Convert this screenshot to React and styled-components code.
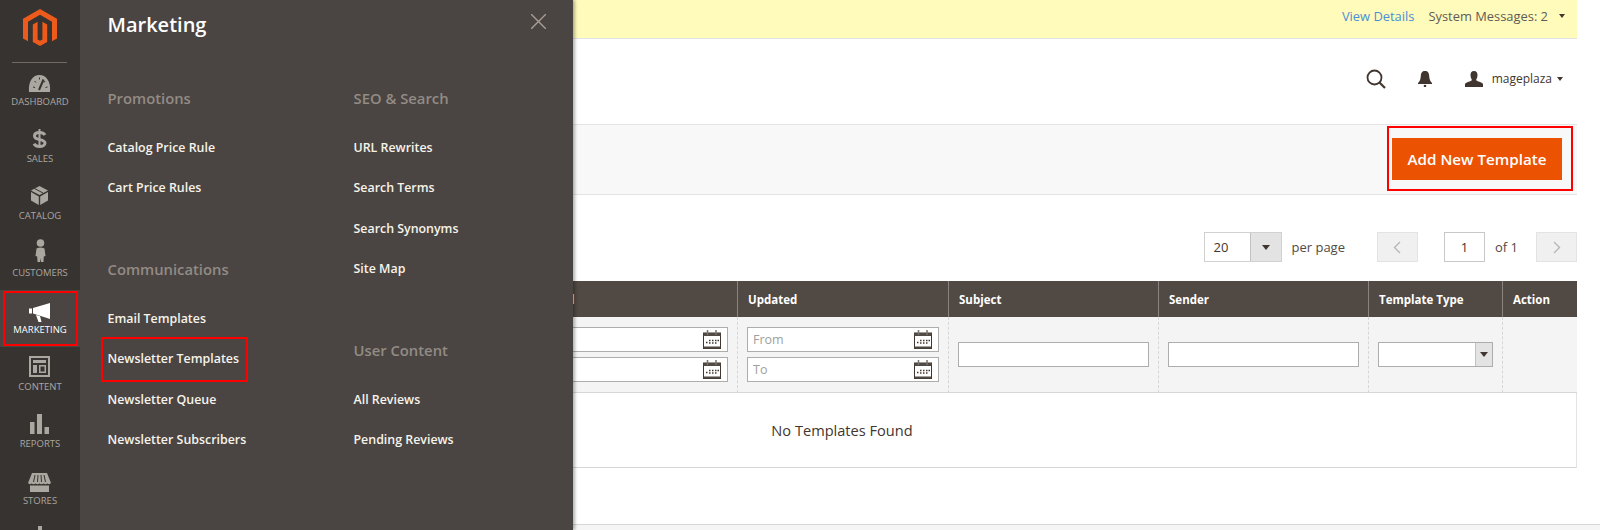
import styled, { createGlobalStyle } from 'styled-components'

const GlobalStyle = createGlobalStyle`
html, body {
    margin: 0;
    padding: 0;
    height: 530px;
    overflow: hidden;
    background: #fff;
    font-family: "Open Sans", "Liberation Sans", sans-serif;
}
*, *::after { box-sizing: border-box; }
`

const Page = styled.div`
display: flex;
position: relative;
width: 1600px;
height: 530px;
overflow: hidden;
`

const Sidebar = styled.nav`
position: relative;
z-index: 2;
flex: 0 0 80px;
height: 530px;
background-color: #373330;
overflow: hidden;
`
const LogoWrap = styled.div`
height: 62px;
padding: 9px 0 0 23px;
position: relative;
&::after {
    content: '';
    position: absolute;
    left: 12px;
    right: 13px;
    bottom: -1px;
    height: 1px;
    background-color: #736963;
}
`
const NavItem = styled.div`
position: relative;
display: flex;
flex-direction: column;
align-items: center;
height: 57px;
padding-top: 3px;
background-color: ${props => props.$active ? '#4a4542' : 'transparent'};
color: ${props => props.$active ? '#ffffff' : '#aaa6a0'};
${props => props.$active && `
    &::after {
        content: '';
        position: absolute;
        left: 3px;
        right: 2px;
        top: 1px;
        bottom: 1px;
        border: 2px solid #f00;
    }
`}
`
const NavIcon = styled.svg`
width: 30px;
height: 30px;
display: block;
fill: currentColor;
`
const NavLabel = styled.span`
font-size: 9.5px;
line-height: 14px;
text-transform: uppercase;
white-space: nowrap;
`

const Panel = styled.aside`
position: absolute;
z-index: 1;
left: 80px;
top: 0;
bottom: 0;
width: 493px;
padding: 10px 0 0 27.5px;
background-color: #4a4542;
box-shadow: 2px 0 3px rgba(0, 0, 0, .3);
`
const PanelTitle = styled.h2`
margin: 0 0 44px;
font-size: 20px;
line-height: 30px;
font-weight: 600;
color: #fff;
`
const CloseIcon = styled.svg`
position: absolute;
top: 14px;
left: 451px;
width: 15px;
height: 15px;
stroke: #a79d95;
stroke-width: 1.4;
`
const PanelColumns = styled.div`
display: flex;
`
const PanelColumn = styled.div`
flex: 0 0 246px;
`
const SectionBlock = styled.section`
margin-bottom: 46.3px;
`
const SectionHeading = styled.h3`
margin: 0 0 15.7px;
font-size: 14.8px;
line-height: 28px;
font-weight: 600;
color: #938b85;
`
const MenuLink = styled.div`
position: relative;
height: 40.5px;
line-height: 40.5px;
font-size: 12.4px;
font-weight: 600;
color: #f7f3eb;
white-space: nowrap;
${props => props.$marked && `
    &::after {
        content: '';
        position: absolute;
        left: -6.5px;
        top: -2px;
        width: 147px;
        height: 45px;
        border: 2px solid #f00;
    }
`}
`

const Main = styled.main`
flex: 1;
display: flex;
flex-direction: column;
min-width: 0;
`
const Content = styled.div`
padding: 0 23px 0 30px;
flex: 1;
`
const Notice = styled.div`
display: flex;
justify-content: flex-end;
align-items: center;
height: 39px;
margin-left: -30px;
padding: 0 12px 6px 0;
background-color: #fffbbb;
border-bottom: 1px solid #e3e3e3;
font-size: 12.9px;
color: #5f5b56;
`
const NoticeLink = styled.span`
color: #4a8fd6;
margin-right: 14px;
`
const Caret = styled.span`
display: inline-block;
width: 0;
height: 0;
margin-left: ${props => props.$gap ?? 11}px;
border-left: ${props => props.$size ?? 3}px solid transparent;
border-right: ${props => props.$size ?? 3}px solid transparent;
border-top: ${props => (props.$size ?? 3) + 1}px solid #41362f;
`
const HeaderRow = styled.header`
display: flex;
justify-content: flex-end;
align-items: center;
height: 85px;
padding: 0 14px 6px 0;
color: #41362f;
font-size: 12px;
`
const HeaderIcon = styled.svg`
display: block;
fill: #41362f;
margin-right: ${props => props.$gap}px;
`
const PageActions = styled.div`
display: flex;
justify-content: flex-end;
align-items: center;
height: 71px;
margin-left: -30px;
padding: 0 15px 1px 0;
background-color: #f8f8f8;
border-top: 1px solid #e3e3e3;
border-bottom: 1px solid #e3e3e3;
`
const AddButton = styled.button`
position: relative;
width: 170px;
height: 42px;
padding: 0;
border: 1px solid #eb5202;
background-color: #eb5202;
color: #fff;
font-family: inherit;
font-size: 15.2px;
font-weight: 600;
&::after {
    content: '';
    position: absolute;
    left: -6px;
    right: -12px;
    top: -13px;
    bottom: -12px;
    border: 2px solid #f00;
}
`

const Toolbar = styled.div`
display: flex;
justify-content: flex-end;
align-items: center;
height: 30px;
margin: 37px 0 19px;
font-size: 13px;
color: #514943;
`
const PerPage = styled.div`
display: flex;
width: 78px;
height: 30px;
border: 1px solid #d1d1d1;
margin-right: 10px;
`
const PerPageValue = styled.span`
flex: 1;
padding-left: 9px;
line-height: 28px;
color: #41362f;
`
const SelectArrow = styled.span`
display: flex;
align-items: center;
justify-content: center;
width: ${props => props.$width}px;
background-color: #e3e3e3;
border-left: 1px solid #c2c2c2;
`
const PageButton = styled.div`
display: flex;
align-items: center;
justify-content: center;
width: 41px;
height: 30px;
background-color: #f0f0f0;
border: 1px solid #e3e3e3;
`
const PageInput = styled.div`
width: 41px;
height: 30px;
line-height: 28px;
text-align: center;
border: 1px solid #c8c8c8;
color: #41362f;
margin: 0 10px 0 26px;
`
const PerPageText = styled.span`
margin-right: 32px;
`
const OfText = styled.span`
margin-right: 18px;
`

const Table = styled.table`
table-layout: fixed;
width: 1467px;
border-collapse: separate;
border-spacing: 0;
`
const HeadCell = styled.th`
height: 36px;
padding: 0 10px;
background-color: #514943;
border-left: 1px solid #8a837f;
color: #fff;
font-size: 11.5px;
font-weight: 700;
text-align: left;
&:first-child { border-left: 0; }
`
const FilterCell = styled.td`
height: 76px;
padding: 0 9px 1px 9px;
background-color: #f4f4f4;
border-left: 1px dashed #d6d6d6;
border-bottom: 1px solid #d6d6d6;
vertical-align: middle;
&:first-child { border-left: 0; }
`
const EmptyCell = styled.td`
height: 75px;
padding-right: 4px;
text-align: center;
font-size: 14.6px;
color: #41362f;
border-left: 1px solid #e3e3e3;
border-right: 1px solid #e3e3e3;
border-bottom: 1px solid #d6d6d6;
`
const TextInput = styled.div`
position: relative;
height: 25px;
padding-left: 5px;
line-height: 23px;
background-color: #fff;
border: 1px solid #adadad;
font-size: 12.5px;
color: #a0a0a0;
& + & { margin-top: 5px; }
`
const CalendarIcon = styled.svg`
position: absolute;
right: 6px;
top: 2px;
width: 18px;
height: 19px;
`
const SelectBox = styled.div`
display: flex;
justify-content: flex-end;
height: 25px;
background-color: #fff;
border: 1px solid #adadad;
`
const Footer = styled.footer`
height: 6px;
background-color: #f5f5f5;
border-top: 1px solid #d6d6d6;
`

const navItems = [
    {
        label: 'Dashboard',
        icon: (
            <>
                <path d="M4 27C3 16 8 10 14.5 10S26 16 25 27Z" />
                <path d="M14 25L18.5 14.5" stroke="#373330" strokeWidth="2" />
                <path d="M8 22l2 .5M9.5 16l1.5 1.5M14.5 12.5v2M20 16l-1 1.500M22.5 22l-2 .5" stroke="#373330" strokeWidth="1" />
            </>
        ),
    },
    {
        label: 'Sales',
        icon: (
            <>
                <path d="M20 13c-1-1.800-3-2.600-5.500-2.600-3 0-5 1.400-5 3.500 0 5 10.500 2.500 10.500 7.200 0 2-2.200 3.400-5.300 3.400-2.500 0-4.700-1-5.700-2.800" fill="none" stroke="currentColor" strokeWidth="3" />
                <path d="M14.500 7v19" stroke="currentColor" strokeWidth="2" />
            </>
        ),
    },
    {
        label: 'Catalog',
        icon: (
            <>
                <path d="M14.500 7L23 11.500L14.500 16L6 11.500Z" />
                <path d="M6 13L13.800 17.500V26L6 21.500Z" />
                <path d="M23 13L15.200 17.500V26L23 21.500Z" />
                <path d="M9.500 9.500L18 14" stroke="#373330" strokeWidth="1" />
            </>
        ),
    },
    {
        label: 'Customers',
        icon: (
            <>
                <circle cx="15.500" cy="7" r="3.800" />
                <path d="M11.500 12.500Q15.500 10.500 19.500 12.500L20.500 20L18.800 20.500L18.500 26H16L15.500 22L15 26H12.500L12.200 20.500L10.500 20Z" />
            </>
        ),
    },
    {
        label: 'Marketing',
        active: true,
        icon: (
            <>
                <path d="M8 15L25 10V26L8 20.500Z" />
                <path d="M4 15.500h3v5H4z" />
                <path d="M11 22L15 23L16.500 29H13.500Z" />
            </>
        ),
    },
    {
        label: 'Content',
        icon: (
            <>
                <path d="M4 6h21v21H4zM6 8v17h17V8z" fillRule="evenodd" />
                <path d="M8 10h13v3H8zM8 15h4v8H8zM14 15h7v8h-7zM15.500 16.500v5h4v-5z" fillRule="evenodd" />
            </>
        ),
    },
    {
        label: 'Reports',
        icon: (
            <>
                <path d="M5 15h4.500v12H5zM12 7h5v20h-5zM19.500 20H24v7h-4.500z" />
            </>
        ),
    },
    {
        label: 'Stores',
        icon: (
            <>
                <path d="M7 9H22L26 19Q24.500 21 22.500 19.500Q20.500 21 18.500 19.500Q16.500 21 14.500 19.500Q12.500 21 10.500 19.500Q8.500 21 6.500 19.500Q4.500 21 3 19Z" />
                <path d="M10 11l-1.500 7M13 11l-.5 7M16 11l.5 7M19 11l1.500 7" stroke="#373330" strokeWidth="1" />
                <path d="M5 21.500h19V28H5z" />
            </>
        ),
    },
    {
        // only the top of this one is on screen, its label is below the fold
        icon: (
            <>
                <circle cx="15" cy="18" r="9" />
                <path d="M13 5h4v6h-4z" />
            </>
        ),
    },
]

const promotionLinks = ['Catalog Price Rule', 'Cart Price Rules']
const communicationLinks = ['Email Templates', 'Newsletter Templates', 'Newsletter Queue', 'Newsletter Subscribers']
const seoLinks = ['URL Rewrites', 'Search Terms', 'Search Synonyms', 'Site Map']
const userContentLinks = ['All Reviews', 'Pending Reviews']

const columnWidths = [90, 327, 210, 211, 210, 210, 134, 75]
const columnNames = ['ID', 'Template', 'Added', 'Updated', 'Subject', 'Sender', 'Template Type', 'Action']

function Calendar() {
    return (
        <CalendarIcon viewBox="0 0 18 19">
            <rect x="0.500" y="3" width="17" height="15.500" fill="#fff" stroke="#41362f" />
            <rect x="0.500" y="3" width="17" height="3" fill="#514943" />
            <rect x="0.500" y="16.500" width="17" height="2" fill="#514943" />
            <path d="M4.500 0v5M13 0v5" stroke="#7a726c" strokeWidth="1.500" />
            <path d="M3 12.500h1.500M6 10.500h1.500M6 13h1.500M9 10.500h1.500M9 13h1.500M12 10.500h1.500M12 13h1.500M14.500 10.500H16" stroke="#41362f" strokeWidth="1.500" />
        </CalendarIcon>
    )
}

function Section({ title, links }) {
    return (
        <SectionBlock>
            <SectionHeading>{title}</SectionHeading>
            {links.map(link => (
                <MenuLink key={link} $marked={link === 'Newsletter Templates'}>{link}</MenuLink>
            ))}
        </SectionBlock>
    )
}

function App() {
    const nav = navItems.map((item, i) => (
        <NavItem key={i} $active={item.active}>
            <NavIcon viewBox="0 0 30 30">{item.icon}</NavIcon>
            {item.label && <NavLabel>{item.label}</NavLabel>}
        </NavItem>
    ))

    return (
        <Page>
            <GlobalStyle />
            <Sidebar>
                <LogoWrap>
                    <svg width="34" height="37" viewBox="0 0 34 37" fill="#ec5a1c">
                        <path d="M17 0L34 9.800V29.400L29 32.200V12.800L17 5.800L5 12.800V32.200L0 29.400V9.800Z" />
                        <path d="M14.600 12.800V30.400L17 31.800L19.400 30.400V12.800L24.200 15.600V32.900L17 37L9.800 32.900V15.600Z" />
                    </svg>
                </LogoWrap>
                {nav}
            </Sidebar>
            <Panel>
                <PanelTitle>Marketing</PanelTitle>
                <CloseIcon viewBox="0 0 15 15">
                    <path d="M0 0L15 15M15 0L0 15" />
                </CloseIcon>
                <PanelColumns>
                    <PanelColumn>
                        <Section title="Promotions" links={promotionLinks} />
                        <Section title="Communications" links={communicationLinks} />
                    </PanelColumn>
                    <PanelColumn>
                        <Section title="SEO &amp; Search" links={seoLinks} />
                        <Section title="User Content" links={userContentLinks} />
                    </PanelColumn>
                </PanelColumns>
            </Panel>
            <Main>
                <Content>
                    <Notice>
                        <NoticeLink>View Details</NoticeLink>
                        System Messages: 2
                        <Caret />
                    </Notice>
                    <HeaderRow>
                        <HeaderIcon $gap={32} width="20" height="20" viewBox="0 0 20 20" style={{ fill: 'none' }}>
                            <circle cx="8.500" cy="8.500" r="7" stroke="#41362f" strokeWidth="1.800" />
                            <path d="M13.500 13.500L19 19" stroke="#41362f" strokeWidth="2.200" />
                        </HeaderIcon>
                        <HeaderIcon $gap={33} width="14" height="16" viewBox="0 0 14 16">
                            <path d="M7 0C4 0 3 2 2.800 5C2.600 8 2 10 0 12V13H14V12C12 10 11.400 8 11.200 5C11 2 10 0 7 0Z" />
                            <circle cx="7" cy="15" r="1.300" />
                        </HeaderIcon>
                        <HeaderIcon $gap={9} width="18" height="16" viewBox="0 0 18 16">
                            <path d="M9 0C6.500 0 5.300 2 5.500 4.500C5.700 6.500 6.500 8 7 9C6 10.500 1 11 0 13V16H18V13C17 11 12 10.500 11 9C11.500 8 12.300 6.500 12.500 4.500C12.700 2 11.500 0 9 0Z" />
                        </HeaderIcon>
                        mageplaza
                        <Caret $gap={5} />
                    </HeaderRow>
                    <PageActions>
                        <AddButton>Add New Template</AddButton>
                    </PageActions>
                    <Toolbar>
                        <PerPage>
                            <PerPageValue>20</PerPageValue>
                            <SelectArrow $width={31}><Caret $gap={0} $size={4} /></SelectArrow>
                        </PerPage>
                        <PerPageText>per page</PerPageText>
                        <PageButton>
                            <svg width="8" height="13" viewBox="0 0 8 13" fill="none" stroke="#b5b5b5" strokeWidth="1.300"><path d="M7 1L1.500 6.500L7 12" /></svg>
                        </PageButton>
                        <PageInput>1</PageInput>
                        <OfText>of 1</OfText>
                        <PageButton>
                            <svg width="8" height="13" viewBox="0 0 8 13" fill="none" stroke="#b5b5b5" strokeWidth="1.300"><path d="M1 1L6.500 6.500L1 12" /></svg>
                        </PageButton>
                    </Toolbar>
                    <Table>
                        <colgroup>
                            {columnWidths.map((width, i) => <col key={i} width={width} />)}
                        </colgroup>
                        <thead>
                            <tr>
                                {columnNames.map(name => <HeadCell key={name}>{name}</HeadCell>)}
                            </tr>
                            <tr>
                                <FilterCell />
                                <FilterCell />
                                <FilterCell>
                                    <TextInput><Calendar /></TextInput>
                                    <TextInput><Calendar /></TextInput>
                                </FilterCell>
                                <FilterCell>
                                    <TextInput>From<Calendar /></TextInput>
                                    <TextInput>To<Calendar /></TextInput>
                                </FilterCell>
                                <FilterCell><TextInput /></FilterCell>
                                <FilterCell><TextInput /></FilterCell>
                                <FilterCell>
                                    <SelectBox><SelectArrow $width={17}><Caret $gap={0} $size={4} /></SelectArrow></SelectBox>
                                </FilterCell>
                                <FilterCell />
                            </tr>
                        </thead>
                        <tbody>
                            <tr>
                                <EmptyCell colSpan={8}>No Templates Found</EmptyCell>
                            </tr>
                        </tbody>
                    </Table>
                </Content>
                <Footer />
            </Main>
        </Page>
    )
}

export default App
